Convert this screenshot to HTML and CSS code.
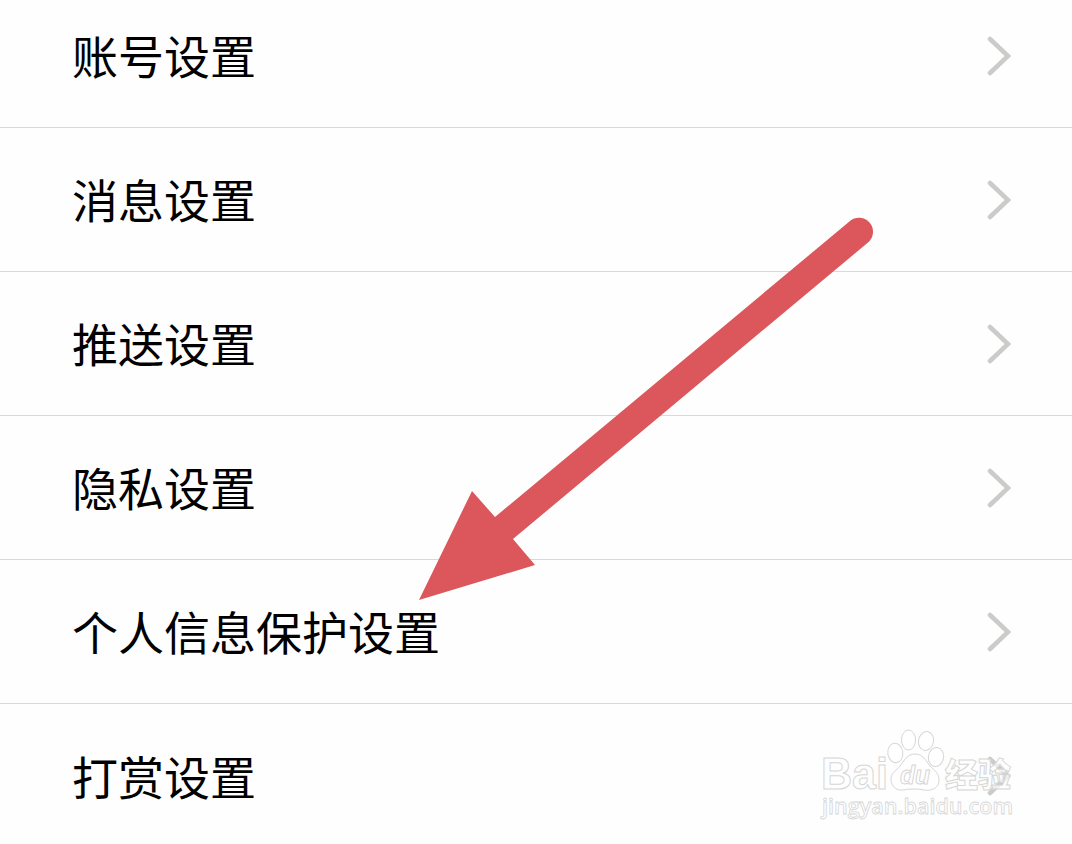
FILE: index.html
```html
<!DOCTYPE html>
<html lang="zh-CN">
<head>
    <meta charset="UTF-8">
    <meta name="viewport" content="width=device-width, initial-scale=1.0">
    <title>设置</title>
    <link rel="stylesheet" href="styles.css">
</head>
<body>
    <div class="screen">
        <ul class="settings-list">
            <li class="settings-item">
                <span class="label">账号设置</span>
                <svg class="chevron" viewBox="0 0 24 40"><path d="M3 3 L21 20 L3 37"/></svg>
            </li>
            <li class="settings-item">
                <span class="label">消息设置</span>
                <svg class="chevron" viewBox="0 0 24 40"><path d="M3 3 L21 20 L3 37"/></svg>
            </li>
            <li class="settings-item">
                <span class="label">推送设置</span>
                <svg class="chevron" viewBox="0 0 24 40"><path d="M3 3 L21 20 L3 37"/></svg>
            </li>
            <li class="settings-item">
                <span class="label">隐私设置</span>
                <svg class="chevron" viewBox="0 0 24 40"><path d="M3 3 L21 20 L3 37"/></svg>
            </li>
            <li class="settings-item">
                <span class="label">个人信息保护设置</span>
                <svg class="chevron" viewBox="0 0 24 40"><path d="M3 3 L21 20 L3 37"/></svg>
            </li>
            <li class="settings-item">
                <span class="label">打赏设置</span>
                <svg class="chevron" viewBox="0 0 24 40"><path d="M3 3 L21 20 L3 37"/></svg>
            </li>
        </ul>

        <!-- Arrow pointing at the privacy protection row -->
        <svg class="arrow" viewBox="0 0 460 390">
            <path d="M4 385 L57 276 L80 302 L435 6 A14 14 0 0 1 453 27.5 L98 324 L120 350 Z"/>
        </svg>

        <!-- Watermark -->
        <svg class="watermark" viewBox="0 0 220 110">
            <text class="mark-bai" x="11" y="69" textLength="67" lengthAdjust="spacingAndGlyphs">Bai</text>
            <g class="paw">
                <ellipse cx="98.5" cy="20" rx="7" ry="10"/>
                <ellipse cx="116" cy="21" rx="7.5" ry="9.5" transform="rotate(12 116 21)"/>
                <ellipse cx="85.3" cy="33" rx="7.5" ry="9.8" transform="rotate(-8 85.3 33)"/>
                <ellipse cx="126" cy="37" rx="7.6" ry="9.5" transform="rotate(8 126 37)"/>
                <path d="M105 34 C97 34 94 41 90 46 C86 51 81 53 81 59 C81 66 86 71 93 70 C98 69 102 69 106 69 C111 69 116 71 120 70 C126 69 129 65 129 60 C129 53 124 50 120 46 C116 41 113 34 105 34 Z"/>
            </g>
            <text class="mark-du" x="90" y="64" textLength="30" lengthAdjust="spacingAndGlyphs">du</text>
            <text class="mark-cn" x="135" y="67" textLength="66">经验</text>
            <text class="mark-url" x="12" y="94" textLength="191" lengthAdjust="spacingAndGlyphs">jingyan.baidu.com</text>
        </svg>
    </div>
</body>
</html>
```

FILE: styles.css
```css
* {
    margin: 0;
    padding: 0;
    box-sizing: border-box;
}

body {
    font-family: "Noto Sans CJK SC", sans-serif;
    background-color: #fefefe;
    color: #000;
}

.screen {
    position: relative;
    width: 1072px;
    height: 844px;
    overflow: hidden;
}

.settings-list {
    list-style: none;
    margin-top: -16px; /* first row is scrolled partly out of view */
}

.settings-item {
    display: flex;
    justify-content: space-between;
    align-items: center;
    height: 144px;
    padding: 0 61px 0 72px;
    border-bottom: 1px solid #d9d9d9;
}

.settings-item:last-child {
    border-bottom: none;
}

.label {
    font-size: 46px;
    line-height: 64px;
    padding-bottom: 3px;
}

.chevron {
    width: 24px;
    height: 40px;
    fill: none;
    stroke: #cbcbc9;
    stroke-width: 4.5;
    stroke-linecap: round;
}

.arrow {
    position: absolute;
    left: 415px;
    top: 215px;
    width: 460px;
    height: 390px;
    fill: #db575c;
}

.watermark {
    position: absolute;
    left: 810px;
    top: 720px;
    width: 220px;
    height: 110px;
    fill: rgba(255, 255, 255, 0.7);
    stroke: #d6d6d6;
    stroke-width: 1;
}

.mark-bai {
    font-family: "Liberation Sans", sans-serif;
    font-size: 44px;
    font-weight: bold;
}

.mark-du {
    font-family: "Liberation Sans", sans-serif;
    font-size: 25px;
    font-weight: bold;
    font-style: italic;
}

.mark-cn {
    font-size: 33px;
    font-weight: 900;
}

.mark-url {
    font-family: "Open Sans", sans-serif;
    font-size: 22px;
    font-weight: 600;
    stroke-width: 0.8;
}
```
